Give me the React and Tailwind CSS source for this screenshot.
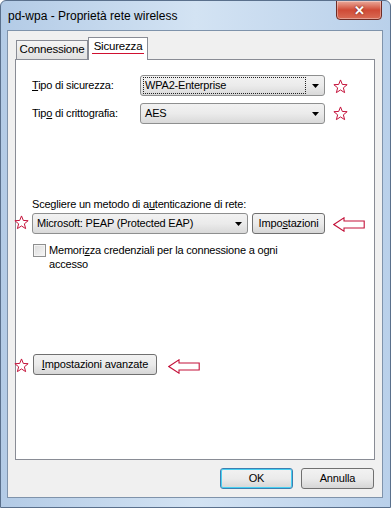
import React from 'react';

function Star() {
  return (
    <svg width="15" height="15" viewBox="0 0 24 24">
      <polygon
        points="12,1.5 14.9,8.7 22.6,9.1 16.6,14.1 18.6,21.8 12,17.5 5.4,21.8 7.4,14.1 1.4,9.1 9.1,8.7"
        fill="white"
        stroke="#c4123a"
        strokeWidth="1.6"
        strokeLinejoin="miter"
      />
    </svg>
  );
}

function LeftArrow() {
  return (
    <svg width="32" height="15" viewBox="0 0 32 15">
      <polygon
        points="0.8,7.5 11,0.8 11,4 31.2,4 31.2,11 11,11 11,14.2"
        fill="white"
        stroke="#c4123a"
        strokeWidth="1.1"
      />
    </svg>
  );
}

function Caret() {
  return (
    <svg width="7" height="4" viewBox="0 0 7 4">
      <polygon points="0,0 7,0 3.5,4" fill="#000" />
    </svg>
  );
}

function Combo({ width, focused, children }) {
  return (
    <div
      className={`flex h-[21px] ${width} items-center justify-between rounded-[3px] border border-[#8e8f8f] bg-gradient-to-b from-[#f2f2f2] via-[#ebebeb] to-[#d9d9d9] pl-[2px] pr-[5px]`}
    >
      <span
        className={`flex h-[17px] flex-1 items-center pl-[1px] leading-none ${
          focused ? 'mr-[6px] border border-dotted border-[#222]' : 'border border-transparent'
        }`}
      >
        {children}
      </span>
      <Caret />
    </div>
  );
}

function Button({ width, isDefault, children }) {
  return (
    <button
      type="button"
      className={`flex h-[21px] ${width} items-center justify-center rounded-[3px] border bg-gradient-to-b from-[#f2f2f2] via-[#ebebeb] to-[#d6d6d6] leading-none tracking-[-0.15px] text-black ${
        isDefault ? 'border-[#3c7fb1] shadow-[inset_0_0_0_1px_#48d0f2]' : 'border-[#707070]'
      }`}
    >
      {children}
    </button>
  );
}

export default function App() {
  return (
    <div className="relative h-[508px] w-[391px] overflow-hidden rounded-t-[6px] border border-[#5a708c] bg-gradient-to-r from-[#b3cbe6] via-[#d3e3f3] to-[#b9d0ea] font-['Segoe_UI','Liberation_Sans',Arial,sans-serif] text-[11px] tracking-[-0.2px] text-black">
      {/* title bar */}
      <div className="flex h-[29px] items-center pl-[7px] text-[12px] tracking-normal text-black">
        pd-wpa - Proprietà rete wireless
      </div>
      <div className="absolute right-[8px] top-[-1px] flex h-[20px] w-[46px] items-center justify-center rounded-b-[4px] border border-[#6e2c25] bg-gradient-to-b from-[#e9a99b] via-[#cf4a36] to-[#d96b55] shadow-[inset_0_0_0_1px_rgba(255,255,255,0.35)]">
        <span className="text-[13px] font-bold leading-none text-white [text-shadow:0_0_2px_#5a1a10]">✕</span>
      </div>

      {/* client area */}
      <div className="ml-[6px] mr-[7px] flex h-[468px] flex-col border border-[#7f93ab] bg-[#f0f0f0] px-[7px]">
        {/* tabs */}
        <div className="mt-[6px] flex h-[22px] items-end">
          <div className="ml-[1px] flex h-[19px] w-[72px] items-center justify-center border border-b-0 border-[#898c95] bg-gradient-to-b from-[#f5f5f5] to-[#e1e1e1] text-[11.5px]">
            Connessione
          </div>
          <div className="relative z-10 -mb-[1px] flex h-[23px] w-[60px] flex-col items-center border border-b-0 border-[#898c95] bg-white pt-[2px]">
            <span className="border-b-[1.5px] border-[#d01030] px-[2px] text-[11.5px] leading-[13px]">Sicurezza</span>
          </div>
        </div>

        {/* panel */}
        <div className="relative h-[401px] border border-[#898c95] bg-white pl-[16px]">
          <div className="mt-[15px] flex h-[21px] items-center">
            <span className="w-[108px]">
              <u>T</u>ipo di sicurezza:
            </span>
            <Combo width="w-[185px]" focused>
              WPA2-Enterprise
            </Combo>
          </div>
          <div className="mt-[7px] flex h-[21px] items-center">
            <span className="w-[108px]">
              Tip<u>o</u> di crittografia:
            </span>
            <Combo width="w-[185px]">AES</Combo>
          </div>

          <div className="mt-[73px] leading-[15px]">
            Scegliere un metodo di a<u>u</u>tenticazione di rete:
          </div>
          <div className="mt-[1px] flex h-[21px] items-center gap-[4px]">
            <Combo width="w-[216px]">Microsoft: PEAP (Protected EAP)</Combo>
            <Button width="w-[73px]">
              Impo<u>s</u>tazioni
            </Button>
          </div>

          <div className="mt-[9px] flex items-start gap-[3px] pl-[1px]">
            <span className="mt-[1px] h-[13px] w-[13px] border border-[#8e8f8f] bg-gradient-to-br from-[#dcdcdc] to-[#f6f6f6] shadow-[inset_0_0_0_1px_#f4f4f4]" />
            <span className="leading-[14px]">
              Memori<u>z</u>za credenziali per la connessione a ogni
              <br />
              accesso
            </span>
          </div>

          <div className="mt-[83px] pl-[1px]">
            <Button width="w-[124px]">
              <span>
                <u>I</u>mpostazioni avanzate
              </span>
            </Button>
          </div>

          {/* annotations */}
          <div className="absolute left-[317px] top-[19px]">
            <Star />
          </div>
          <div className="absolute left-[317px] top-[46px]">
            <Star />
          </div>
          <div className="absolute left-[-2px] top-[155px]">
            <Star />
          </div>
          <div className="absolute left-[317px] top-[157px]">
            <LeftArrow />
          </div>
          <div className="absolute left-[-2px] top-[298px]">
            <Star />
          </div>
          <div className="absolute left-[152px] top-[299px]">
            <LeftArrow />
          </div>
        </div>

        {/* bottom buttons */}
        <div className="mt-[8px] flex justify-end gap-[8px] pr-[1px]">
          <Button width="w-[73px]" isDefault>
            OK
          </Button>
          <Button width="w-[73px]">Annulla</Button>
        </div>
      </div>
    </div>
  );
}
